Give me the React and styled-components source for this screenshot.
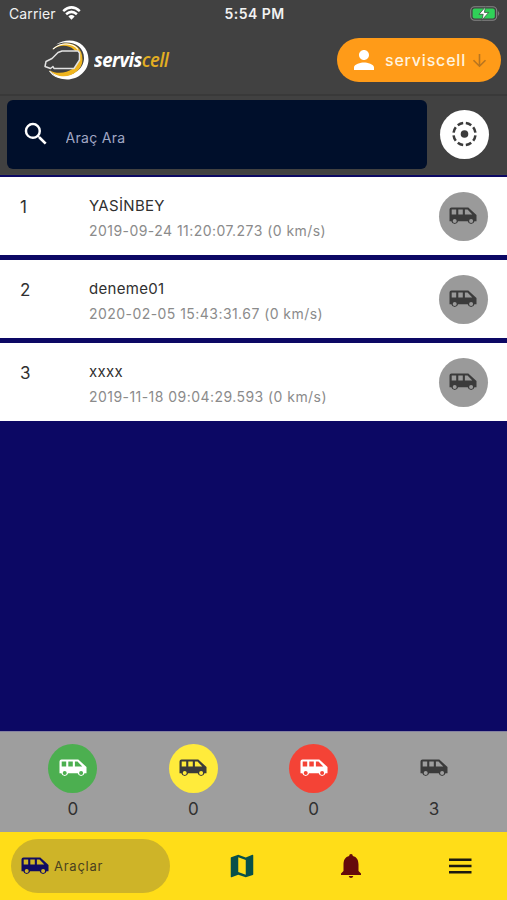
import React from "react";
import styled, { createGlobalStyle } from "styled-components";
import { MdPerson, MdSearch, MdMap } from "react-icons/md";

const GlobalStyle = createGlobalStyle`
  * { box-sizing: border-box; }
  body { margin: 0; font-family: Inter, "Liberation Sans", sans-serif; }
`;

const Screen = styled.div`
  width: 507px;
  height: 900px;
  display: flex;
  flex-direction: column;
  background: #0c0864;
  color: #303030;
  overflow: hidden;
`;

const Header = styled.header`
  height: 94px;
  flex: none;
  background: #414141;
  color: #fff;
`;

const StatusBar = styled.div`
  display: grid;
  grid-template-columns: 1fr auto 1fr;
  align-items: center;
  height: 28px;
  padding: 0 7px 1px 9px;
  font-size: 14px;
  line-height: 18px;
  color: #f2f2f2;
`;

const Carrier = styled.div`
  display: flex;
  align-items: center;
  gap: 6px;
  letter-spacing: 0.1px;
`;

const Clock = styled.div`
  font-weight: 600;
  font-size: 14px;
  letter-spacing: 0.45px;
`;

const BatterySlot = styled.div`
  display: flex;
  justify-content: flex-end;
`;

const BrandBar = styled.div`
  display: flex;
  justify-content: space-between;
  align-items: center;
  height: 64px;
  padding: 0 6px 0 44px;
`;

const Brand = styled.div`
  display: flex;
  align-items: center;
`;

const Wordmark = styled.div`
  margin: 0 0 0 5px;
  font-family: "Open Sans", "Noto Sans", sans-serif;
  font-style: italic;
  font-weight: 700;
  font-size: 19px;
  line-height: 24px;
  letter-spacing: -0.5px;
  transform: scaleX(0.975);
  transform-origin: left center;
  white-space: nowrap;
`;

const WordmarkTail = styled.span`
  color: #e3ae22;
  font-weight: 600;
`;

const AccountButton = styled.button`
  display: flex;
  align-items: center;
  width: 164px;
  height: 44px;
  padding: 0 14px 0 12px;
  border: 0;
  border-radius: 22px;
  background: #ff9b18;
  color: #fff;
  font: 450 16px Inter, sans-serif;
  letter-spacing: 0.8px;
`;

const AccountName = styled.span`
  margin: 0 auto 1px 6px;
  color: #fff3df;
`;

const SearchRow = styled.div`
  display: flex;
  align-items: center;
  flex: none;
  height: 81px;
  padding: 0 18px 2px 7px;
  background: #414141;
  border-top: 2px solid #393939;
  border-bottom: 1px solid #454545;
  justify-content: space-between;
`;

const SearchBox = styled.label`
  display: flex;
  align-items: center;
  width: 420px;
  height: 69px;
  padding-left: 14px;
  border-radius: 6px;
  background: #000f2b;
  color: #fff;
`;

const SearchInput = styled.input`
  width: 300px;
  margin: 7px 0 0 14.5px;
  padding: 0;
  border: 0;
  outline: 0;
  background: transparent;
  font: 400 14px Inter, sans-serif;
  letter-spacing: 0.3px;
  &::placeholder { color: #a0a7c4; opacity: 1; }
`;

const Disc = styled.div`
  display: flex;
  align-items: center;
  justify-content: center;
  flex: none;
  width: 49px;
  height: 49px;
  border-radius: 50%;
  background: ${({ $fill }) => $fill};
  color: ${({ $ink }) => $ink || "#3b3b3b"};
`;

const VehicleList = styled.main`
  flex: 1;
  display: flex;
  flex-direction: column;
  gap: 5px;
  padding-top: 2px;
`;

const VehicleRow = styled.article`
  display: grid;
  grid-template-columns: 69px 1fr auto;
  height: 78px;
  padding: 0 19.5px 0 20px;
  background: #fff;
`;

const VehicleIndex = styled.div`
  padding-top: 18.5px;
  font-size: 17px;
  line-height: 22px;
`;

const VehicleInfo = styled.div`
  padding-top: 18px;
  white-space: nowrap;
`;

const VehicleName = styled.div`
  font-size: 15px;
  line-height: 22px;
  letter-spacing: 0.3px;
`;

const VehicleTime = styled.div`
  margin-top: 2.5px;
  font-size: 14px;
  line-height: 22px;
  letter-spacing: 0.45px;
  color: #8b8b8b;
`;

const VehicleStatus = styled.div`
  align-self: center;
`;

const Summary = styled.section`
  display: grid;
  grid-template-columns: repeat(4, 120.4px);
  justify-content: center;
  flex: none;
  height: 101px;
  padding-top: 11.5px;
  background: #9e9e9e;
  border-top: 1px solid #8582a0;
`;

const SummaryItem = styled.div`
  display: flex;
  flex-direction: column;
  align-items: center;
`;

const SummaryCount = styled.div`
  margin-top: 5.5px;
  font-size: 17px;
  line-height: 22px;
`;

const NavBar = styled.nav`
  display: grid;
  grid-template-columns: 178px 128px 90px 1fr;
  align-items: center;
  flex: none;
  height: 68px;
  background: #ffdd18;
`;

const ActiveTab = styled.a`
  display: flex;
  align-items: center;
  gap: 5px;
  width: 159px;
  height: 54px;
  margin-left: 10.5px;
  padding-left: 10.5px;
  border-radius: 27px;
  background: #ceb428;
  color: #100b62;
`;

const TabLabel = styled.span`
  color: #4b421f;
  font-size: 13px;
  letter-spacing: 0.75px;
`;

const Tab = styled.a`
  display: flex;
  justify-content: center;
  color: ${({ $ink }) => $ink};
`;

const MenuTab = styled(Tab)`
  padding-left: 17px;
`;

const VanIcon = () => (
  <svg width="28" height="18" viewBox="0 0 28 18" fill="currentColor">
    <path
      fillRule="evenodd"
      d="M2.500.5H19.300L27.500 8V14.300H25.500A3.500 3.500 0 0 1 18.700 14.300H9.100A3.500 3.500 0 0 1 2.300 14.300H.5V2.500A2 2 0 0 1 2.500.5ZM2.700 2.600V7.400H7.200V2.600ZM9.300 2.600V7.400H13.800V2.600ZM15.900 2.600V7.400H23.300L18.500 2.600ZM5.700 11.900A2 2 0 1 0 5.700 15.900A2 2 0 1 0 5.700 11.900ZM22.100 11.900A2 2 0 1 0 22.100 15.900A2 2 0 1 0 22.100 11.900Z"
    />
  </svg>
);

const WifiIcon = () => (
  <svg width="19" height="15" viewBox="0 0 19 15" fill="none" stroke="#fff" strokeWidth="2.5">
    <path d="M1.2 5.1Q9.5-2.3 17.8 5.1M4.1 8.3Q9.5 3.5 14.9 8.3" />
    <path d="M6.4 10.5Q9.5 7.7 12.6 10.5L9.5 13.7Z" fill="#fff" stroke="none" />
  </svg>
);

const BatteryIcon = () => (
  <svg width="30" height="15" viewBox="0 0 30 15">
    <rect x=".7" y=".7" width="26" height="13.6" rx="4" fill="none" stroke="#858585" strokeWidth="1.1" />
    <rect x="2.6" y="2.6" width="22.2" height="9.8" rx="2" fill="#30d158" />
    <path d="M28.2 5q2 2.5 0 5z" fill="#858585" />
    <path d="M15.5.8 9 8.3h4.2l-1.4 6L18.7 6.4h-4.3z" fill="#fff" stroke="#39523f" strokeWidth=".8" />
  </svg>
);

const BrandMark = () => (
  <svg width="45" height="41" viewBox="0 0 45 41" fill="none">
    <path d="M12 4.5C26-4.5 44.5 2 44.5 19.5C44.5 37 20 48 6 31C21 42 40 32 40 18C40 5 26-1 12 4.5Z" fill="#fff" />
    <path d="M8 10C17-1 38.5 1 38.5 19.5C38.5 34 18 43 5 30C17 37 34 30 34 19C34 7 19 1 8 10Z" fill="#efb51f" />
    <path d="M9 9C17 2 29 2.5 34 9.5M5.5 31C13 41 26 40 33 32" stroke="#fff" strokeWidth="1.2" />
    <path d="m10 28.5-1-2-2.5 2L1 26.5l1-5 6-3L14 12.5l4-1.500h16l1.500 2v7L30 28.500Z" fill="#414141" stroke="#e2e2e2" strokeWidth="1.5" strokeLinejoin="round" />
  </svg>
);

const ArrowDownIcon = () => (
  <svg width="15" height="15" viewBox="0 0 15 15" fill="none" stroke="#b87520" strokeWidth="1.6">
    <path d="M7.5 1v12M1.5 7.2l6 6 6-6" />
  </svg>
);

const LocateIcon = () => (
  <svg width="26" height="26" viewBox="0 0 26 26" fill="none">
    <circle cx="12.5" cy="13" r="11" stroke="#3b3b3b" strokeWidth="2.5" pathLength="80" strokeDasharray="6.8 3.2" strokeDashoffset="-1.6" />
    <circle cx="12.5" cy="13" r="3.8" fill="#3b3b3b" />
  </svg>
);

const BellIcon = () => (
  <svg width="22" height="26" viewBox="0 0 22 26" fill="currentColor">
    <path d="M11 1c1.200 0 1.800.8 1.800 2 4 1 5.700 4 5.700 8.500v6.500l2.500 2.500V22H1v-1.500L3.500 18v-6.500C3.500 7 5.200 4 9.200 3c0-1.200.6-2 1.800-2ZM8.700 23h4.600q-.5 2-2.300 2t-2.300-2Z" />
  </svg>
);

const MenuIcon = () => (
  <svg width="24" height="18" viewBox="0 0 24 18" stroke="currentColor" strokeWidth="2.6">
    <path d="M1 2.7h22.5M1 9h22.5M1 15.3h22.5" />
  </svg>
);

const vehicles = [
  { name: "YASİNBEY", time: "2019-09-24 11:20:07.273 (0 km/s)" },
  { name: "deneme01", time: "2020-02-05 15:43:31.67 (0 km/s)" },
  { name: "xxxx", time: "2019-11-18 09:04:29.593 (0 km/s)" },
];

const totals = [
  { fill: "#4caf50", ink: "#fff", count: 0 },
  { fill: "#ffeb3b", count: 0 },
  { fill: "#f44336", ink: "#fff", count: 0 },
  { fill: "transparent", count: 3 },
];

export default function App() {
  return (
    <Screen>
      <GlobalStyle />
      <Header>
        <StatusBar>
          <Carrier>Carrier <WifiIcon /></Carrier>
          <Clock>5:54 PM</Clock>
          <BatterySlot><BatteryIcon /></BatterySlot>
        </StatusBar>
        <BrandBar>
          <Brand>
            <BrandMark />
            <Wordmark>servis<WordmarkTail>cell</WordmarkTail></Wordmark>
          </Brand>
          <AccountButton>
            <MdPerson size={30} />
            <AccountName>serviscell</AccountName>
            <ArrowDownIcon />
          </AccountButton>
        </BrandBar>
      </Header>
      <SearchRow>
        <SearchBox>
          <MdSearch size={30} />
          <SearchInput placeholder="Araç Ara" />
        </SearchBox>
        <Disc $fill="#fff"><LocateIcon /></Disc>
      </SearchRow>
      <VehicleList>
        {vehicles.map(({ name, time }, i) => (
          <VehicleRow key={name}>
            <VehicleIndex>{i + 1}</VehicleIndex>
            <VehicleInfo>
              <VehicleName>{name}</VehicleName>
              <VehicleTime>{time}</VehicleTime>
            </VehicleInfo>
            <VehicleStatus>
              <Disc $fill="#9a9a9a"><VanIcon /></Disc>
            </VehicleStatus>
          </VehicleRow>
        ))}
      </VehicleList>
      <Summary>
        {totals.map(({ fill, ink, count }) => (
          <SummaryItem key={fill}>
            <Disc $fill={fill} $ink={ink}><VanIcon /></Disc>
            <SummaryCount>{count}</SummaryCount>
          </SummaryItem>
        ))}
      </Summary>
      <NavBar>
        <ActiveTab>
          <VanIcon />
          <TabLabel>Araçlar</TabLabel>
        </ActiveTab>
        <Tab $ink="#08504a"><MdMap size={30} /></Tab>
        <Tab $ink="#650b0b"><BellIcon /></Tab>
        <MenuTab $ink="#1c1a10"><MenuIcon /></MenuTab>
      </NavBar>
    </Screen>
  );
}
